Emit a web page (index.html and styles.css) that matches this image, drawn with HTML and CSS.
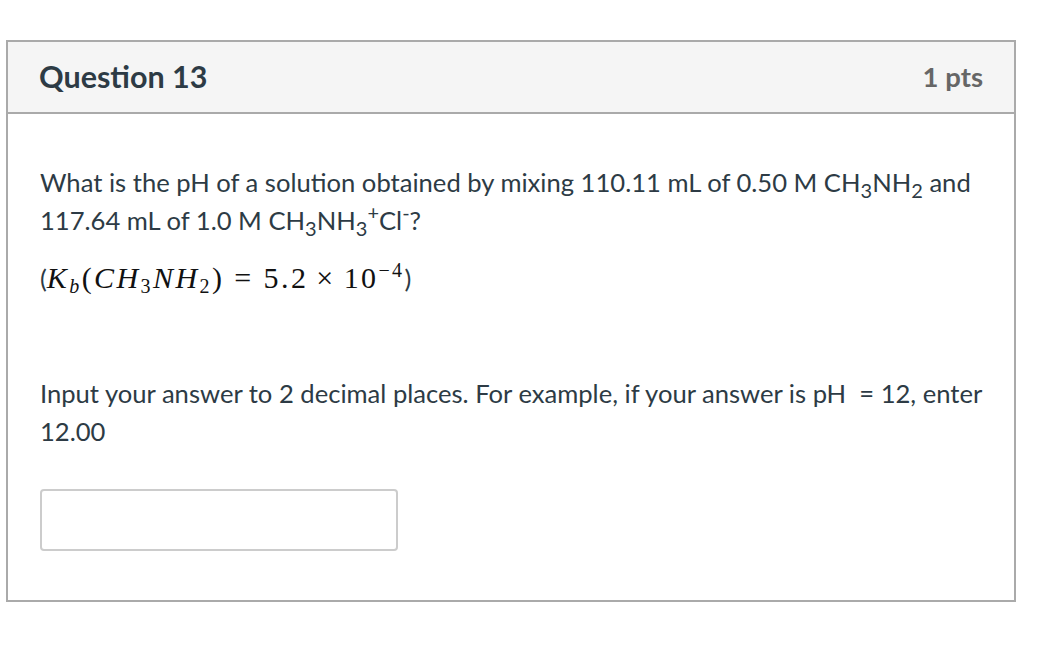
FILE: index.html
```html
<!DOCTYPE html>
<html>
<head>
<meta charset="utf-8">
<link rel="stylesheet" href="styles.css">
</head>
<body>
<div class="question">
  <div class="q-header">
    <h2 class="q-title">Question 13</h2>
    <span class="q-points">1 pts</span>
  </div>
  <div class="q-body">
    <p class="q-text">What is the pH of a solution obtained by mixing 110.11 mL of 0.50 M CH<sub>3</sub>NH<sub>2</sub> and 117.64 mL of 1.0 M CH<sub>3</sub>NH<sub>3</sub><sup>+</sup>Cl<sup>-</sup>?</p>
    <p class="q-text math-line">(<span class="math"><span class="mi">K</span><sub class="msub mi">b</sub><span class="mo">(</span><span class="mi">C</span><span class="mi">H</span><sub class="msub">3</sub><span class="mi">N</span><span class="mi">H</span><sub class="msub">2</sub><span class="mo">)</span><span class="rel">=</span><span class="mn">5.2</span><span class="bin">×</span><span class="mn">10</span><sup class="msup">−4</sup></span>)</p>
    <p class="q-text spacer">&nbsp;</p>
    <p class="q-text">Input your answer to 2 decimal places. For example, if your answer is pH&nbsp; = 12, enter 12.00</p>
    <div class="answer-row"><input class="answer" type="text" aria-label="answer"></div>
  </div>
</div>
</body>
</html>
```
FILE: styles.css
```css
html, body {
  margin: 0;
  padding: 0;
  background: #fff;
}
body {
  font-family: Lato, "Liberation Sans", sans-serif;
  color: #2d3b45;
}
.question {
  margin: 40px 0 0 6px;
  width: 1010px;
  box-sizing: border-box;
  border: 2px solid #aaaaaa;
}
.q-header {
  display: flex;
  justify-content: space-between;
  align-items: center;
  height: 72px;
  box-sizing: border-box;
  background: #f5f5f5;
  border-bottom: 2px solid #aaaaaa;
  padding: 0 31px 2px 31px;
}
.q-title {
  margin: 0;
  font-size: 30.5px;
  font-weight: 700;
  color: #2d3b45;
}
.q-points {
  font-size: 27.5px;
  font-weight: 700;
  color: #666666;
}
.q-body {
  padding: 49px 32px 49px 32px;
}
.q-text {
  margin: 0;
  font-size: 25.6px;
  line-height: 38.4px;
}
.q-text + .q-text {
  margin-top: 19px;
}
.q-text sub, .q-text sup {
  font-size: 20px;
  line-height: 0;
}
.math {
  font-family: "Liberation Serif", "DejaVu Serif", serif;
  font-size: 30px;
  color: #111;
  letter-spacing: 2.4px;
}
.mi {
  font-style: italic;
}
.math .msub {
  font-size: 20px;
  font-style: normal;
  vertical-align: -5px;
}
.math .msub.mi {
  font-style: italic;
}
.math .msup {
  font-size: 20px;
  vertical-align: 11px;
}
.rel {
  padding: 0 10px;
}
.bin {
  padding: 0 8px;
}
.answer-row {
  margin-top: 39px;
}
.answer {
  display: block;
  width: 358px;
  height: 62px;
  box-sizing: border-box;
  border: 2px solid #cccccc;
  border-radius: 4px;
  background: #fff;
  margin: 0;
  padding: 0 8px;
}
```
